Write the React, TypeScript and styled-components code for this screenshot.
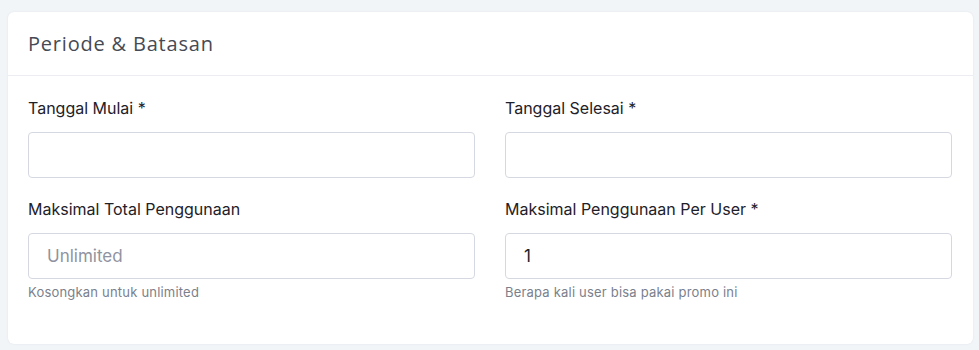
import React from "react";
import styled, { createGlobalStyle } from "styled-components";

const Global = createGlobalStyle`
  html, body { margin: 0; padding: 0; background: #f2f5f8; }
  body { font-family: "Inter", "Noto Sans", sans-serif; }
`;

const Page = styled.div`
  padding: 12px 6px 5px 8px;
`;

const Card = styled.section`
  background: #ffffff;
  border-radius: 6px;
  box-shadow: 0 0 2px rgba(82, 63, 105, 0.12);
`;

const Header = styled.div`
  height: 63px;
  display: flex;
  align-items: center;
  padding: 0 20px;
  border-bottom: 1px solid #ebedf3;
`;

const Title = styled.h3`
  margin: 0;
  font-family: "Open Sans", "Noto Sans", sans-serif;
  font-weight: 500;
  font-size: 20px;
  letter-spacing: 0.8px;
  color: #464a53;
`;

const Body = styled.div`
  padding: 21px 21px 44px 20px;
  display: grid;
  grid-template-columns: 1fr 1fr;
  column-gap: 30px;
  row-gap: 20px;
`;

const Field = styled.div`
  display: flex;
  flex-direction: column;
`;

const Label = styled.label`
  font-size: 16px;
  line-height: 22px;
  color: #1e2129;
  margin-bottom: 13px;
`;

const Input = styled.input`
  box-sizing: border-box;
  height: 46px;
  width: 100%;
  border: 1px solid #d6d8e1;
  border-radius: 4px;
  padding: 0 18px;
  font-family: inherit;
  font-size: 17px;
  color: #1e2129;
  background: #fff;
  outline: none;
  &::placeholder { color: #8f93a0; }
`;

const Help = styled.div`
  margin-top: 5px;
  font-size: 13px;
  line-height: 16px;
  letter-spacing: 0.2px;
  color: #7b7f8c;
`;

export default function App() {
  return (
    <Page>
      <Global />
      <Card>
        <Header>
          <Title>Periode &amp; Batasan</Title>
        </Header>
        <Body>
          <Field>
            <Label>Tanggal Mulai *</Label>
            <Input type="text" />
          </Field>
          <Field>
            <Label>Tanggal Selesai *</Label>
            <Input type="text" />
          </Field>
          <Field>
            <Label>Maksimal Total Penggunaan</Label>
            <Input type="text" placeholder="Unlimited" />
            <Help>Kosongkan untuk unlimited</Help>
          </Field>
          <Field>
            <Label>Maksimal Penggunaan Per User *</Label>
            <Input type="text" defaultValue="1" />
            <Help>Berapa kali user bisa pakai promo ini</Help>
          </Field>
        </Body>
      </Card>
    </Page>
  );
}
